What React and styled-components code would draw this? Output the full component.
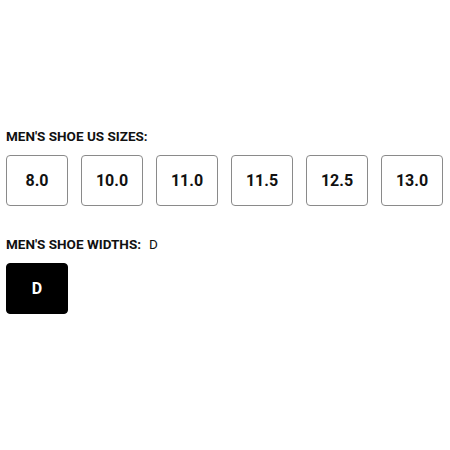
import React from "react";
import styled, { createGlobalStyle } from "styled-components";

const GlobalStyle = createGlobalStyle`
  body {
    margin: 0;
    background: #fff;
    font-family: Roboto, "Liberation Sans", sans-serif;
    color: #111;
  }
`;

const Page = styled.div`
  padding: 127px 6px 0;
  display: flex;
  flex-direction: column;
`;

const Section = styled.section`
  display: flex;
  flex-direction: column;
  gap: 10px;
  margin-bottom: 29px;
`;

const Label = styled.div`
  font-size: 13.5px;
  font-weight: 700;
  line-height: 18px;
  text-transform: uppercase;
  display: flex;
  gap: 8px;
`;

const Value = styled.span`
  font-weight: 400;
`;

const Options = styled.div`
  display: flex;
  gap: 13px;
`;

const Option = styled.button`
  width: 62px;
  height: 51px;
  border-radius: 4px;
  border: 1px solid ${(p) => (p.selected ? "#000" : "#8a8a8a")};
  background: ${(p) => (p.selected ? "#000" : "#fff")};
  color: ${(p) => (p.selected ? "#fff" : "#111")};
  font-family: Roboto, "Liberation Sans", sans-serif;
  font-size: 16px;
  font-weight: 700;
  padding: 0;
  cursor: pointer;
`;

const sizes = ["8.0", "10.0", "11.0", "11.5", "12.5", "13.0"];

export default function App() {
  return (
    <Page>
      <GlobalStyle />
      <Section>
        <Label>Men's Shoe US Sizes:</Label>
        <Options>
          {sizes.map((s) => (
            <Option key={s}>{s}</Option>
          ))}
        </Options>
      </Section>
      <Section>
        <Label>
          Men's Shoe Widths: <Value>D</Value>
        </Label>
        <Options>
          <Option selected>D</Option>
        </Options>
      </Section>
    </Page>
  );
}
